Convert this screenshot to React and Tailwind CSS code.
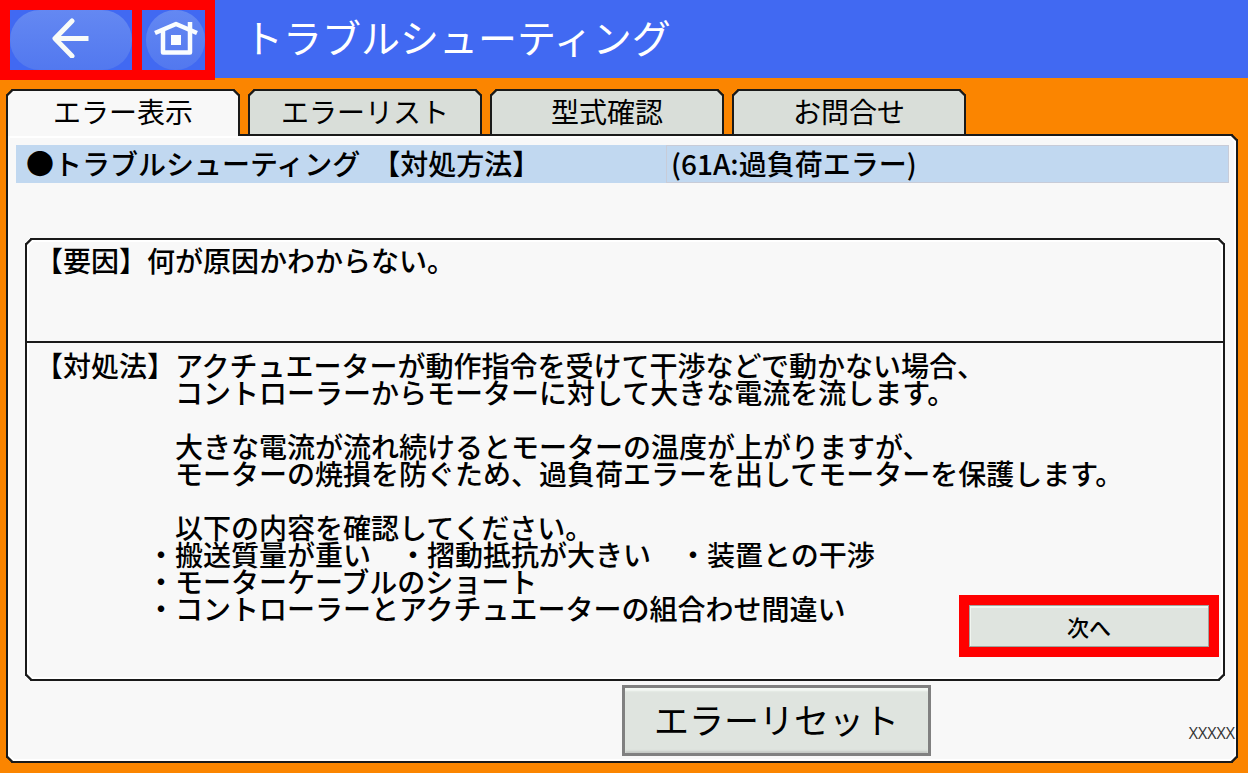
import React, { useState } from 'react'

const tabs = ['エラー表示', 'エラーリスト', '型式確認', 'お問合せ']

const remedy = [
  '【対処法】アクチュエーターが動作指令を受けて干渉などで動かない場合、',
  '　　　　　コントローラーからモーターに対して大きな電流を流します。',
  '',
  '　　　　　大きな電流が流れ続けるとモーターの温度が上がりますが、',
  '　　　　　モーターの焼損を防ぐため、過負荷エラーを出してモーターを保護します。'
].join('\n')

const checks = [
  '　　　　　以下の内容を確認してください。',
  '　　　　・搬送質量が重い　・摺動抵抗が大きい　・装置との干渉',
  '　　　　・モーターケーブルのショート',
  '　　　　・コントローラーとアクチュエーターの組合わせ間違い'
].join('\n')

function BackIcon() {
  return (
    <svg width="38" height="40" viewBox="0 0 38 40" fill="none" stroke="#f8fbf8" strokeWidth="5" strokeLinejoin="round" aria-hidden="true">
      <path d="M20 3 3 20.500 20 38" strokeLinecap="round" />
      <path d="M3 20.500H36.500" />
    </svg>
  )
}

function HomeIcon() {
  return (
    <svg width="44" height="35" viewBox="0 0 44 35" fill="none" stroke="#fafdff" aria-hidden="true">
      <path d="M1 12 22 3 43 12" strokeWidth="4.500" strokeLinejoin="round" />
      <path d="M9 10V31.500H36V10M36 9V1" strokeWidth="4.500" strokeLinejoin="round" />
      <path d="M17 14h10v10H17z" fill="#fafdff" stroke="none" />
    </svg>
  )
}

function Header() {
  return (
    <header className="flex items-start h-[78px] bg-[#4169f2]">
      <nav className="relative flex gap-2.5 p-2.5 h-20 bg-[#ff0000]">
        <button type="button" aria-label="戻る" className="w-[122px] bg-[#4169f2]">
          <span className="flex items-center justify-center h-full pb-1 rounded-full bg-linear-to-b from-[#6488f2] to-[#5278ef]">
            <BackIcon />
          </span>
        </button>
        <button type="button" aria-label="ホーム" className="w-[63px] pl-1 bg-[#4169f2]">
          <span className="flex items-center justify-center h-full pb-1 rounded-full bg-linear-to-b from-[#6488f2] to-[#5278ef]">
            <HomeIcon />
          </span>
        </button>
      </nav>
      <h1 className="self-center pb-1.5 ml-[29px] text-[39px] leading-none text-white">トラブルシューティング</h1>
    </header>
  )
}

export default function App() {
  const [active, setActive] = useState(0)

  return (
    <div className="flex flex-col min-h-screen bg-[#fb8500] text-black font-['Noto_Sans_CJK_JP',sans-serif]">
      <Header />
      <main className="flex flex-col flex-1 pt-[11px] pl-1.5 pr-2.5 pb-2.5">
        <div role="tablist" className="flex gap-2 h-[45px]">
          {tabs.map((t, i) => (
            <button
              key={t}
              type="button"
              role="tab"
              aria-selected={i === active}
              onClick={() => setActive(i)}
              className={`w-[234px] text-[28px] leading-none border-2 border-b-0 border-[#1a1a1a] rounded-t-[6px] [corner-shape:bevel] ${
                i === active ? 'relative h-[47px] pb-1.5 bg-[#f8f8f8]' : 'h-[45px] pb-1 bg-[#d9ded9]'
              }`}
            >
              {t}
            </button>
          ))}
        </div>

        <section className="flex flex-col flex-1 border-2 border-[#1a1a1a] rounded-[6px] rounded-tl-none [corner-shape:bevel] bg-[#f8f8f8] shadow-[inset_0_0_0_2px_#ffffff]">
          <h2 className="flex mt-[9px] ml-2 mr-[7px] h-[38px] bg-[#c1d8f0] text-[28px] leading-9 font-medium">
            <span className="flex gap-3 w-[650px] pl-2.5">
              <span>●トラブルシューティング</span>
              <span>【対処方法】</span>
            </span>
            <span className="flex-1 pl-1 leading-[34px] border border-[#c8ccd8]">(61A:過負荷エラー)</span>
          </h2>

          <div className="flex flex-col flex-1 mt-[55px] ml-[17px] mr-[11px] border-2 border-[#1a1a1a] rounded-[6px] [corner-shape:bevel] shadow-[inset_0_0_0_2px_#ffffff] text-[28px] leading-[27px] font-medium">
            <p className="h-[103px] pt-[7px] pl-2 border-b-2 border-[#1a1a1a]">【要因】何が原因かわからない。</p>
            <p className="pt-[9px] pl-2 whitespace-pre">{remedy}</p>
            <div className="flex flex-1 justify-between mt-[27px] pl-2 pr-1">
              <p className="whitespace-pre">{checks}</p>
              <div className="self-end mb-[22px] p-2.5 bg-[#ff0000]">
                <button
                  type="button"
                  className="block w-60 h-[42px] border border-[#a0a5a0] bg-[#dfe4df] shadow-[inset_1px_2px_0_#f0f5f0] text-[22px] leading-none"
                >
                  次へ
                </button>
              </div>
            </div>
          </div>

          <footer className="flex items-start mt-1 mb-[5px]">
            <button
              type="button"
              className="ml-[50%] w-[309px] h-[71px] pb-1 border-3 border-[#808080] bg-[#dfe4df] shadow-[inset_0_3px_2px_#f4f9f4,inset_0_-2px_2px_#c4c9c4] text-[35px] leading-none"
            >
              エラーリセット
            </button>
            <span className="ml-auto mt-[38px] mr-px text-base leading-5 text-[#333333] font-['Open_Sans',sans-serif]">
              XXXXX
            </span>
          </footer>
        </section>
      </main>
    </div>
  )
}
